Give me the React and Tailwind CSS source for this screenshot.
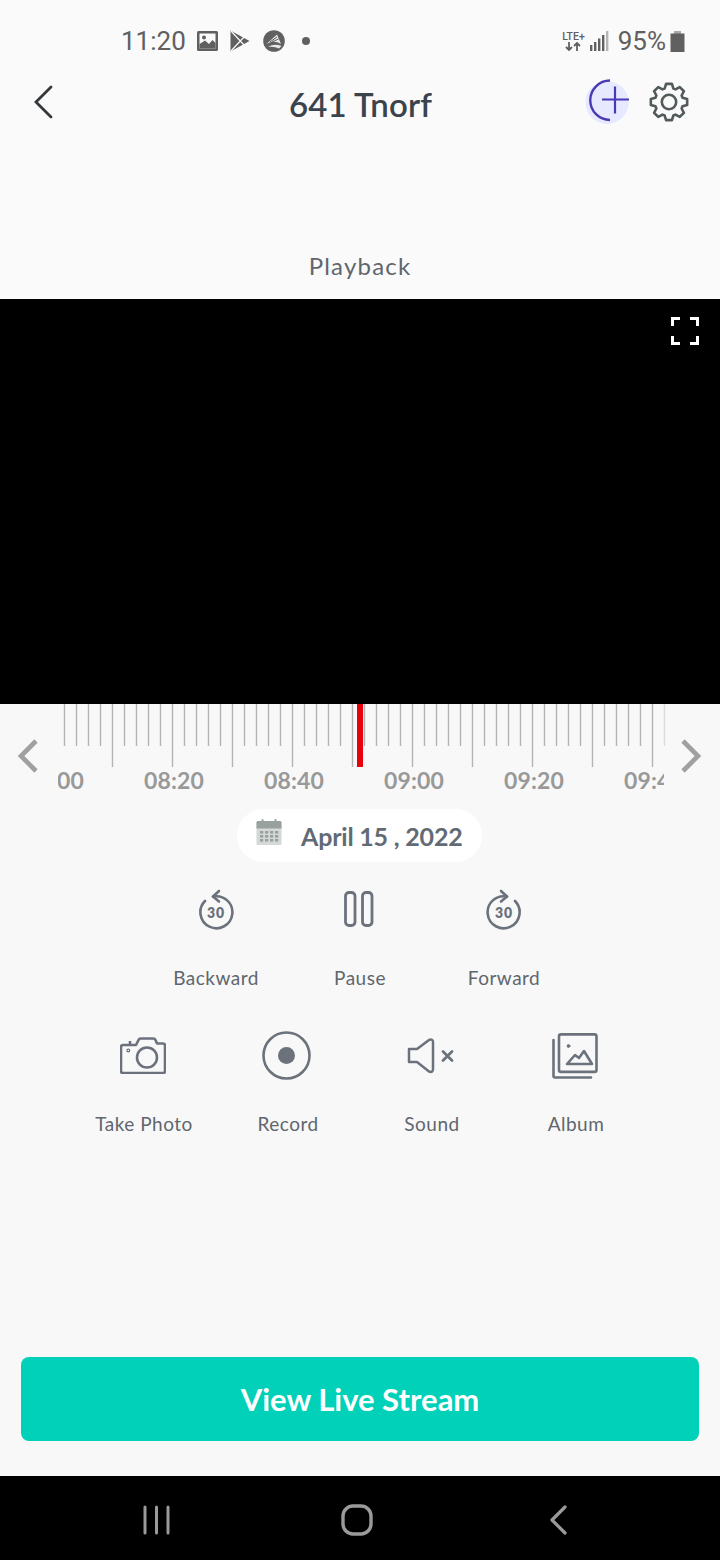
import React from "react";

const BODY = "font-['Lato','Noto_Sans',sans-serif]";
const ROBOTO = "font-['Roboto','Noto_Sans',sans-serif]";

const ticks = Array.from({ length: 51 }, (_, i) => 64 + i * 12);

function Ruler() {
  return (
    <svg width="720" height="63" viewBox="0 0 720 63" className="block">
      {ticks.map((x) => {
        const long = (x - 112) % 60 === 0;
        return (
          <line key={x} x1={x + 0.5} x2={x + 0.5} y1="0" y2={long ? 63 : 42} stroke={x === 664 ? "#dddddd" : "#b4b4b4"} strokeWidth="1.4" />
        );
      })}
      <rect x="357" y="0" width="6" height="63" fill="#e8000c" />
    </svg>
  );
}

function Chevron({ dir }) {
  return (
    <svg width="24" height="38" viewBox="0 0 24 38">
      <path d={dir === "left" ? "M20 4 L5 19 L20 34" : "M4 4 L19 19 L4 34"} fill="none" stroke="#a0a0a0" strokeWidth="4.6" />
    </svg>
  );
}

function Skip({ forward }) {
  return (
    <svg width="36" height="44" viewBox="0 0 36 44" fill="none" stroke="#6b727c" strokeWidth="2.6" strokeLinecap="round" strokeLinejoin="round">
      {forward ? (
        <>
          <path d="M21 7.6 A16 16 0 1 0 29 12" />
          <path d="M15 2 L21 7.5 L15 12.5" />
        </>
      ) : (
        <>
          <path d="M15 7.6 A16 16 0 1 1 7 12" />
          <path d="M21 2 L15 7.5 L21 12.5" />
        </>
      )}
      <text x="18" y="28.5" textAnchor="middle" fontFamily="Lato, sans-serif" fontWeight="800" fontSize="14" fill="#6b727c" stroke="none" letterSpacing="0.8">30</text>
    </svg>
  );
}

function Pause() {
  return (
    <svg width="30" height="36" viewBox="0 0 30 36" fill="none" stroke="#6b727c" strokeWidth="2.8" className="-ml-[2px] -mt-[3px]">
      <rect x="1.5" y="1.5" width="9.5" height="33" rx="3.5" />
      <rect x="18.5" y="1.5" width="9.5" height="33" rx="3.5" />
    </svg>
  );
}

function Camera() {
  return (
    <svg width="46" height="37" viewBox="0 0 46 37" fill="none" stroke="#6b727c" strokeWidth="2.6" strokeLinejoin="round" className="-ml-[3px]">
      <path d="M3 8 H16 L18.5 3 Q19 1.5 21 1.5 H33 Q35 1.5 35.5 3 L37 6.5 H43 Q45 6.5 45 8.5 V34 Q45 36 43 36 H3 Q1 36 1 34 V10 Q1 8 3 8 Z" />
      <circle cx="27" cy="20.5" r="10" />
      <circle cx="8.3" cy="13.5" r="1.4" strokeWidth="1.2" />
      <line x1="10" y1="4" x2="10" y2="8" />
    </svg>
  );
}

function Record() {
  return (
    <svg width="49" height="49" viewBox="0 0 49 49" className="-ml-[3px]">
      <circle cx="24.5" cy="24.5" r="23" fill="none" stroke="#6b727c" strokeWidth="2.6" />
      <circle cx="24.5" cy="24.5" r="8.5" fill="#6b727c" />
    </svg>
  );
}

function Mute() {
  return (
    <svg width="48" height="36" viewBox="0 0 48 36" fill="none" stroke="#6b727c" strokeWidth="2.5" strokeLinejoin="round" strokeLinecap="round" className="-ml-[2px]">
      <path d="M2 11 H10 L22 2 Q26 0.5 26 4 V31 Q26 35 22 33.5 L10 24 H2 Z" />
      <path d="M36 13.5 L45 22.5 M45 13.5 L36 22.5" strokeWidth="2.8" />
    </svg>
  );
}

function Album() {
  return (
    <svg width="46" height="46" viewBox="0 0 46 46" fill="none" stroke="#6b727c" strokeWidth="2.6" strokeLinejoin="round" strokeLinecap="round" className="-ml-[3px]">
      <rect x="7" y="1.4" width="37.5" height="37.5" rx="2" />
      <path d="M1.5 7 V43 Q1.5 44.5 3 44.5 H39" />
      <path d="M15 31 L23 22 L27 25 L32 18 L40 31 Z" />
      <circle cx="16.5" cy="13" r="1.5" fill="#6b727c" strokeWidth="0.8" />
    </svg>
  );
}

function Calendar() {
  return (
    <svg width="26" height="26" viewBox="0 0 26 26" className="mb-[4px]">
      <rect x="0.5" y="2" width="25" height="24" rx="1.5" fill="#d4d8d6" />
      <path d="M0.5 3.5 Q0.5 2 2 2 H24 Q25.5 2 25.5 3.5 V9.5 H0.5 Z" fill="#98a19e" />
      <rect x="5.5" y="0" width="2" height="6" rx="1" fill="#98a19e" />
      <rect x="18.5" y="0" width="2" height="6" rx="1" fill="#98a19e" />
      {[12, 16, 20].map((y) =>
        [4, 9, 14, 19].map((x) => <rect key={`${x}${y}`} x={x} y={y} width="3.2" height="2.6" fill="#98a19e" />)
      )}
    </svg>
  );
}

function gearPath() {
  const c = 20, ro = 18.4, ri = 14.2, n = 8;
  const pts = [];
  for (let i = 0; i < n; i++) {
    const a = (i * 2 * Math.PI) / n - Math.PI / 2;
    const d = 0.2, e = 0.31;
    [[ri, a - e], [ro, a - d * 0.8], [ro, a + d * 0.8], [ri, a + e]].forEach(([r, t]) => {
      pts.push(`${(c + r * Math.cos(t)).toFixed(2)} ${(c + r * Math.sin(t)).toFixed(2)}`);
    });
  }
  return `M${pts.join(" L")} Z`;
}

function Gear() {
  return (
    <svg width="40" height="40" viewBox="0 0 40 40" fill="none" stroke="#525a5c" strokeWidth="2.6" strokeLinejoin="round" className="mb-[7px] ml-[19px]">
      <path d={gearPath()} />
      <circle cx="20" cy="20" r="7.2" />
    </svg>
  );
}

function Action({ label, icon, iconH, gap }) {
  return (
    <div className="flex w-[144px] flex-col items-center">
      <div className={`flex items-center justify-center ${iconH}`}>{icon}</div>
      <span className={`${BODY} ${gap} text-[19px] leading-[24px] tracking-[0.5px] text-[#5f666e]`}>{label}</span>
    </div>
  );
}

function StatusBar() {
  return (
    <div className={`${ROBOTO} flex h-[62px] items-center pt-[20px] pl-[121px] pr-[35px] text-[26px] leading-none text-[#606060]`}>
      <span>11:20</span>
      <svg width="22" height="21" viewBox="0 0 22 21" className="ml-[11px]">
        <rect width="21" height="20" rx="1.5" fill="#606060" />
        <rect x="2.5" y="2.5" width="16" height="15" fill="#fafafa" />
        <path d="M2.5 17.5 V13 L8 9.5 L12 13 L15.5 9 L18.5 12 V17.5 Z" fill="#606060" />
        <circle cx="7" cy="6.5" r="2" fill="#606060" />
      </svg>
      <svg width="20" height="22" viewBox="0 0 20 22" className="ml-[11px]">
        <path d="M0.5 0.5 L19.5 11 L0.5 21.5 Z" fill="#606060" />
        <path d="M1 1 L14 15 M1 21 L14 7" stroke="#fafafa" strokeWidth="1.2" />
      </svg>
      <svg width="22" height="22" viewBox="0 0 22 22" className="ml-[13px]">
        <circle cx="11" cy="11" r="10.8" fill="#606060" />
        <path d="M3.5 14 L14 4.5 L18 14 Q11 9.5 3.5 14Z M5 17 Q11 13 18.5 16 L16 18.5 Q11 16 5 17Z" fill="#e8e8e8" />
        <path d="M7 12 L14 7 M9 12 L15.5 9" stroke="#606060" strokeWidth="1" />
      </svg>
      <span className="ml-[17px] h-[8px] w-[8px] rounded-full bg-[#606060]" />
      <div className="ml-auto flex flex-col items-center text-[10.5px] font-medium leading-[11px]">
        <span>LTE+</span>
        <svg width="16" height="9" viewBox="0 0 16 9" fill="none" stroke="#606060" strokeWidth="1.8">
          <path d="M4 0 V8 M1 5 L4 8 L7 5 M12 9 V1 M9 4 L12 1 L15 4" />
        </svg>
      </div>
      <svg width="19" height="20" viewBox="0 0 19 20" className="ml-[5px]">
        <rect x="0" y="14" width="2.4" height="6" fill="#606060" />
        <rect x="4" y="11" width="2.4" height="9" fill="#606060" />
        <rect x="8" y="7.5" width="2.4" height="12.5" fill="#606060" />
        <rect x="12" y="4" width="2.4" height="16" fill="#606060" />
        <rect x="16" y="0" width="2.4" height="20" fill="#b5b5b5" />
      </svg>
      <span className="ml-[9px]">95%</span>
      <svg width="15" height="21" viewBox="0 0 15 21" className="ml-[4px]">
        <rect x="4" y="0" width="7" height="3" fill="#a8a8a8" />
        <rect x="0.5" y="2.5" width="14" height="18.5" fill="#606060" />
      </svg>
    </div>
  );
}

function Header() {
  return (
    <div className="mt-[12px] flex h-[62px] items-center pl-[32px] pr-[31px]">
      <svg width="22" height="34" viewBox="0 0 22 34" fill="none" stroke="#33383d" strokeWidth="2.8" strokeLinecap="round" className="mb-[6px]">
        <path d="M19 2 L4 17 L19 32" />
      </svg>
      <h1 className={`${BODY} mb-[2px] ml-[235px] text-[33px] font-semibold leading-none tracking-[0.1px] text-[#3b434d]`}>641 Tnorf</h1>
      <div className="ml-auto flex items-center">
        <svg width="46" height="46" viewBox="0 0 46 46" className="mb-[7px]" fill="none">
          <circle cx="23" cy="23.5" r="21.5" fill="#e6e9ff" />
          <path d="M26 1.5 A19.75 19.75 0 0 0 26 41" stroke="#4a38b5" strokeWidth="2.4" />
          <path d="M18 20.5 H45 M31 7.5 V34.5" stroke="#4a38b5" strokeWidth="2.2" />
        </svg>
        <Gear />
      </div>
    </div>
  );
}

export default function App() {
  return (
    <div className="flex h-[1560px] w-[720px] flex-col overflow-hidden bg-[#f8f8f8]">
      <div className="h-[299px] bg-[#fafafa]">
        <StatusBar />
        <Header />
        <p className={`${BODY} mt-[115px] text-center text-[24px] leading-[30px] tracking-[1.2px] text-[#5f666e]`}>Playback</p>
      </div>

      <div className="flex h-[405px] justify-end bg-black pt-[18px] pr-[21px]">
        <svg width="28" height="28" viewBox="0 0 28 28" fill="none" stroke="#ffffff" strokeWidth="3">
          <path d="M1.5 9 V1.5 H9 M19 1.5 H26.5 V9 M26.5 19 V26.5 H19 M9 26.5 H1.5 V19" />
        </svg>
      </div>

      <Ruler />

      <div className="-mt-[30px] flex items-start justify-between pl-[16px] pr-[17px]">
        <Chevron dir="left" />
        <Chevron dir="right" />
      </div>

      <div className="ml-[58px] -mt-[9px] flex h-[28px] w-[606px] overflow-hidden">
        {["08:00", "08:20", "08:40", "09:00", "09:20", "09:40"].map((t, i) => (
          <span
            key={t}
            className={`${BODY} w-[120px] shrink-0 text-center text-[23px] font-bold leading-[28px] tracking-[0.1px] text-[#999999] ${i === 0 ? "-ml-[64px]" : ""}`}
          >
            {t}
          </span>
        ))}
      </div>

      <div className="mt-[15px] flex justify-center pr-[1px]">
        <div className="flex h-[53px] w-[245px] items-center rounded-full bg-white pl-[19px] pb-[3px]">
          <Calendar />
          <span className={`${BODY} ml-[19px] pt-[5px] text-[25px] font-bold leading-none tracking-[-0.2px] text-[#626a75]`}>April 15 , 2022</span>
        </div>
      </div>

      <div className="mt-[25px] flex justify-center">
        <Action label="Backward" iconH="h-[47px]" gap="mt-[32px]" icon={<Skip />} />
        <Action label="Pause" iconH="h-[47px]" gap="mt-[32px]" icon={<Pause />} />
        <Action label="Forward" iconH="h-[47px]" gap="mt-[32px]" icon={<Skip forward />} />
      </div>

      <div className="mt-[41px] flex justify-center">
        <Action label="Take Photo" iconH="h-[49px]" gap="mt-[32px]" icon={<Camera />} />
        <Action label="Record" iconH="h-[49px]" gap="mt-[32px]" icon={<Record />} />
        <Action label="Sound" iconH="h-[49px]" gap="mt-[32px]" icon={<Mute />} />
        <Action label="Album" iconH="h-[49px]" gap="mt-[32px]" icon={<Album />} />
      </div>

      <div className="mt-auto px-[21px] pb-[35px]">
        <button className={`${BODY} flex h-[84px] w-full items-center justify-center rounded-[8px] bg-[#00d1b8] text-[31px] font-bold text-white`}>
          View Live Stream
        </button>
      </div>

      <div className="flex h-[84px] items-center bg-black pl-[143px] pt-[3px]">
        <svg width="28" height="30" viewBox="0 0 28 30" stroke="#9a9a9a" strokeWidth="3" strokeLinecap="round">
          <path d="M2 2 V28 M13.5 2 V28 M25 2 V28" />
        </svg>
        <svg width="32" height="32" viewBox="0 0 32 32" fill="none" stroke="#9a9a9a" strokeWidth="3.4" className="ml-[170px]">
          <rect x="2" y="2" width="28" height="28" rx="10" />
        </svg>
        <svg width="20" height="32" viewBox="0 0 20 32" fill="none" stroke="#9a9a9a" strokeWidth="3.2" strokeLinecap="round" strokeLinejoin="round" className="ml-[176px]">
          <path d="M16 3 L3 16 L16 29" />
        </svg>
      </div>
    </div>
  );
}
